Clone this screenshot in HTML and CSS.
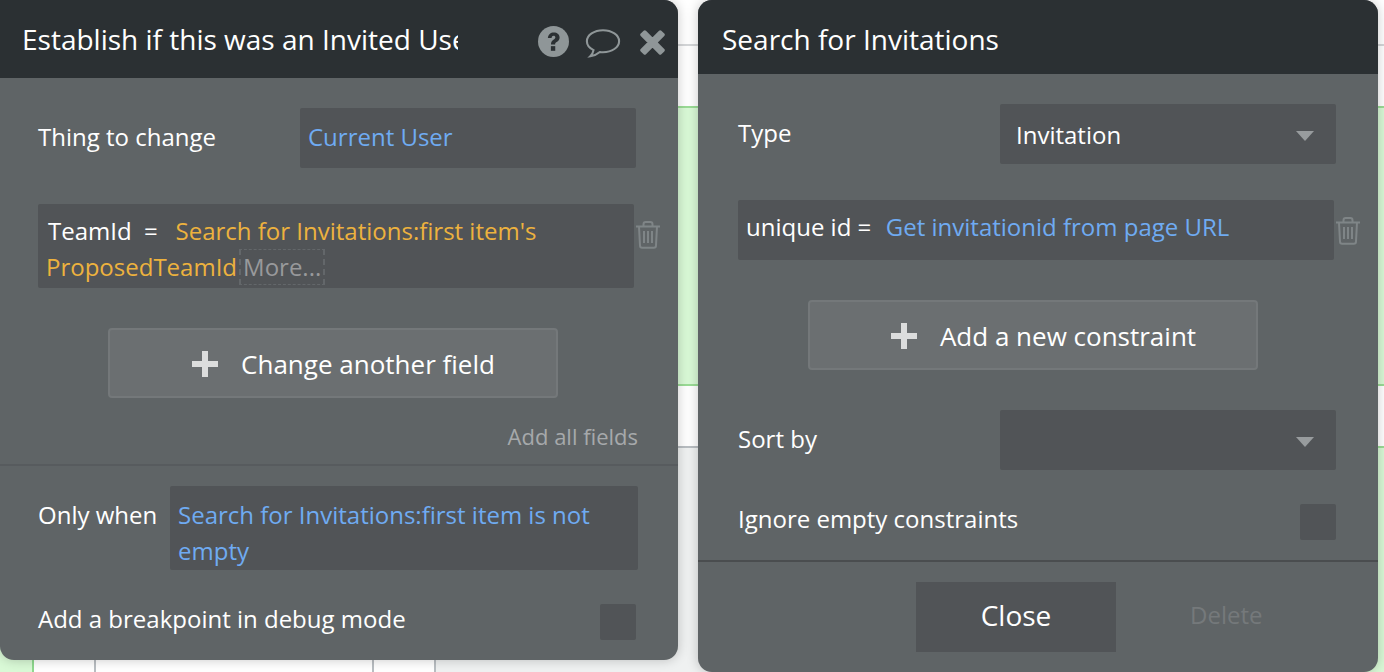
FILE: index.html
```html
<!DOCTYPE html>
<html lang="en">
<head>
<meta charset="utf-8">
<title>Workflow editor</title>
<link rel="stylesheet" href="styles.css">
</head>
<body>
<div class="stage">
  <div class="canvas">
    <div class="band"></div>
    <div class="rule rule-a"></div>
    <div class="rule rule-b"></div>
    <div class="lower"></div>
    <div class="band-low"></div>
    <div class="vline v1"></div>
    <div class="vline v2"></div>
    <div class="vline v3"></div>
    <div class="vline v4"></div>
    <div class="corner-green"></div>
  </div>
  <div class="panels">
    <section class="panel panel-left">
      <header class="head head-left">
        <h2 class="title title-clip">Establish if this was an Invited User</h2>
        <div class="head-icons">
          <svg class="ico-help" width="31" height="31" viewBox="0 0 32 32"><circle cx="16" cy="16" r="16" fill="#8f9698"/><path d="M10.200 12.400C10.500 8.700 13 6.600 16.300 6.600c3.500 0 6 2.100 6 5.200 0 2.300-1.300 3.600-3 4.700-1.300.8-1.600 1.300-1.600 2.600h-4.300c0-2.500.6-3.800 2.500-5 1.400-.9 2-1.400 2-2.300 0-1-.7-1.700-1.800-1.700-1.200 0-1.900.8-2.100 2.200z" fill="#2b3033"/><rect x="13.300" y="20.800" width="4.500" height="4.800" fill="#2b3033"/></svg>
          <svg class="ico-comment" width="36" height="31" viewBox="0 0 38 32"><path d="M19 2C9.600 2 2 7.200 2 13.600c0 3.900 2.800 7.300 7 9.400-.4 2.200-1.500 4.600-3.400 6.500 3.600-.6 7.700-2.400 10.100-4.500 1.100.2 2.200.2 3.300.2 9.400 0 17-5.200 17-11.600S28.400 2 19 2z" fill="none" stroke="#8f9698" stroke-width="2.200"/></svg>
          <svg class="ico-close" width="25" height="25" viewBox="0 0 26 26"><path d="M5 2 13 10 21 2 24 5 16 13 24 21 21 24 13 16 5 24 2 21 10 13 2 5z" fill="#8f9698" stroke="#8f9698" stroke-width="3.500" stroke-linejoin="round"/></svg>
        </div>
      </header>
      <div class="row row-thing">
        <span class="label">Thing to change</span>
        <div class="box box-value"><span class="blue">Current User</span></div>
      </div>
      <div class="field-row field-team">
        <div class="box-wide team-box">
          <span class="line"><span class="white first-word">TeamId&nbsp;&nbsp;=&nbsp;&nbsp;&nbsp;</span><span class="orange">Search for Invitations:first item's</span></span>
          <span class="line"><span class="orange">ProposedTeamId</span><span class="more">More...</span></span>
        </div>
        <svg class="trash" width="24" height="28" viewBox="0 0 24 28"><path d="M0 5.500h24M3 5.500l1 19c0 1.300.8 2.300 2.200 2.300h11.600c1.400 0 2.200-1 2.200-2.300l1-19M7.500 5V3.200C7.500 1.900 8.400 1 9.700 1h4.600c1.300 0 2.200.9 2.200 2.200V5M8 10v12M12 10v12M16 10v12" fill="none" stroke="#7f8587" stroke-width="2"/></svg>
      </div>
      <button class="add-btn add-left"><svg class="plus" width="28" height="28" viewBox="0 0 28 28"><path d="M11 1h6v10h10v6H17v10h-6V17H1v-6h10z" fill="#dcdddd"/></svg><span>Change another field</span></button>
      <div class="add-all">Add all fields</div>
      <div class="divider divider-left"></div>
      <div class="row row-when">
        <span class="label label-when">Only when</span>
        <div class="box-when blue">Search for Invitations:first item is not empty</div>
      </div>
      <div class="row row-break">
        <span class="label label-check">Add a breakpoint in debug mode</span>
        <div class="check"></div>
      </div>
    </section>

    <section class="panel panel-right">
      <header class="head head-right">
        <h2 class="title">Search for Invitations</h2>
      </header>
      <div class="row row-type">
        <span class="label label-up">Type</span>
        <div class="box box-select"><span class="white">Invitation</span><i class="caret"></i></div>
      </div>
      <div class="field-row field-unique">
        <div class="box-wide unique-box"><span class="white">unique id =&nbsp;&nbsp;</span><span class="blue url">Get invitationid from page URL</span></div>
        <svg class="trash" width="24" height="28" viewBox="0 0 24 28"><path d="M0 5.500h24M3 5.500l1 19c0 1.300.8 2.300 2.200 2.300h11.600c1.400 0 2.200-1 2.200-2.300l1-19M7.500 5V3.200C7.500 1.900 8.400 1 9.700 1h4.600c1.300 0 2.200.9 2.200 2.200V5M8 10v12M12 10v12M16 10v12" fill="none" stroke="#7f8587" stroke-width="2"/></svg>
      </div>
      <button class="add-btn add-right"><svg class="plus" width="28" height="28" viewBox="0 0 28 28"><path d="M11 1h6v10h10v6H17v10h-6V17H1v-6h10z" fill="#dcdddd"/></svg><span>Add a new constraint</span></button>
      <div class="row row-sort">
        <span class="label label-up">Sort by</span>
        <div class="box box-select"><i class="caret"></i></div>
      </div>
      <div class="row row-ignore">
        <span class="label label-check">Ignore empty constraints</span>
        <div class="check"></div>
      </div>
      <div class="divider divider-right"></div>
      <div class="foot">
        <button class="close-btn">Close</button>
        <span class="delete">Delete</span>
      </div>
    </section>
  </div>
</div>
</body>
</html>
```
FILE: styles.css
```css
* { box-sizing: border-box; }
html, body { margin: 0; padding: 0; }
body {
  width: 1384px;
  height: 672px;
  overflow: hidden;
  background: #fff;
  font-family: "Open Sans", "Liberation Sans", sans-serif;
  font-size: 24px;
  color: #fff;
}
.stage { position: relative; width: 1384px; height: 672px; overflow: hidden; }

/* the page behind the floating editor windows */
.canvas { position: absolute; inset: 0; }
.band { position: absolute; left: 33px; right: 0; top: 106px; height: 280px; background: #d9f9d6; border-top: 2px solid #9bdc96; border-bottom: 2px solid #9bdc96; }
.rule { position: absolute; left: 0; right: 0; height: 2px; background: #d5d7d9; }
.rule-a { top: 44px; }
.rule-b { top: 446px; background: #b9bec2; }
.lower { position: absolute; left: 436px; width: 600px; top: 448px; bottom: 0; background: #eff1f1; }
.band-low { position: absolute; left: 1036px; right: 0; top: 446px; bottom: 0; background: #d9f9d6; border-top: 2px solid #9bdc96; }
.vline { position: absolute; top: 640px; bottom: 0; width: 2px; background: #b9bec2; }
.v1 { left: 32px; background: #8fd98f; }
.v2 { left: 94px; }
.v3 { left: 372px; }
.v4 { left: 434px; }
.corner-green { position: absolute; left: 0; top: 640px; bottom: 0; width: 32px; background: #d9f9d6; }

.panels { position: relative; display: flex; gap: 20px; align-items: flex-start; }
.panel {
  background: #5f6466;
  box-shadow: 0 0 12px rgba(0, 0, 0, .22);
  display: flex;
  flex-direction: column;
}
.panel-left { width: 678px; height: 660px; border-radius: 0 14px 14px 14px; }
.panel-right { width: 680px; height: 672px; border-radius: 14px; }

.head { background: #2b3033; display: flex; align-items: center; flex: none; }
.head-left { height: 78px; padding: 0 13px 0 22px; border-radius: 0 14px 0 0; }
.head-right { height: 74px; padding: 4px 22px 0 24px; border-radius: 14px 14px 0 0; }
.title { margin: 0; font-size: 28px; font-weight: 400; line-height: 40px; white-space: nowrap; color: #fff; }
.title-clip { width: 436px; overflow: hidden; }
.head-icons { margin-left: auto; display: flex; align-items: flex-start; align-self: flex-start; }
.ico-help { margin: 26px 16px 0 0; }
.ico-comment { margin: 28px 19px 0 0; }
.ico-close { margin-top: 30px; }

.label { color: #fff; line-height: 36px; white-space: nowrap; }
.label-up { padding-bottom: 2px; }
.label-check { line-height: 30px; }
.label-when { padding-top: 11px; }
.white { color: #fff; }
.blue { color: #6fabf2; }
.orange { color: #edb23e; }

.row { display: flex; align-items: center; justify-content: space-between; }
.box {
  width: 336px;
  height: 60px;
  background: #515457;
  border-radius: 2px;
  display: flex;
  align-items: center;
  padding: 0 8px 4px;
}
.box-select { padding: 0 16px; justify-content: space-between; }
.caret { display: block; width: 0; height: 0; margin-left: auto; margin-right: 6px; margin-top: 4px; border-left: 9px solid transparent; border-right: 9px solid transparent; border-top: 10px solid #989c9e; }
.box-wide { width: 596px; background: #515457; border-radius: 2px; }
.line { display: block; line-height: 36px; white-space: nowrap; }

/* left window */
.row-thing { margin: 30px 42px 0 38px; }
.row-thing .label { padding-bottom: 2px; }
.field-row { display: flex; align-items: flex-start; }
.field-team { margin: 36px 0 0 38px; }
.team-box { height: 84px; padding: 9px 8px 0; }
.first-word { padding-left: 2px; margin-right: -1px; }
.more { display: inline-block; height: 36px; margin-left: 2px; padding: 0 2px; color: #98999b; border: 2px dashed #63676a; border-top-width: 1px; border-bottom-width: 1px; line-height: 34px; }
.trash { flex: none; margin: 17px 0 0 2px; }
.add-btn {
  display: flex;
  align-items: center;
  justify-content: center;
  gap: 22px;
  width: 450px;
  height: 70px;
  padding: 1px 0 0 20px;
  background: #6b6f71;
  border: 2px solid #74787a;
  border-radius: 4px;
  color: #fff;
  font-family: inherit;
  font-size: 26px;
}
.add-left { margin: 40px 0 0 108px; }
.add-right { margin: 40px 0 0 110px; }
.add-all { margin: 20px 40px 0 0; text-align: right; color: #a6a9ab; line-height: 36px; font-size: 22px; }
.divider { height: 2px; flex: none; }
.divider-left { margin-top: 10px; background: #575b5e; }
.row-when { margin: 20px 40px 0 38px; align-items: flex-start; }
.box-when { width: 468px; height: 84px; padding: 11px 8px 0; background: #515457; border-radius: 2px; line-height: 36px; }
.row-break { margin: 34px 42px 0 38px; align-items: flex-start; }
.check { width: 36px; height: 36px; background: #515457; border-radius: 2px; flex: none; }

/* right window */
.row-type { margin: 30px 42px 0 40px; }
.field-unique { margin: 36px 0 0 40px; }
.unique-box { height: 60px; padding: 9px 8px 0; line-height: 36px; white-space: nowrap; }
.url { margin-left: 2px; }
.row-sort { margin: 40px 42px 0 40px; }
.row-ignore { margin: 34px 42px 0 40px; align-items: flex-start; }
.divider-right { margin-top: 20px; background: #4a4d4f; }
.foot { display: flex; align-items: center; margin: 20px 0 0 218px; }
.close-btn { width: 200px; height: 70px; padding: 0 0 5px; background: #515457; border: 0; color: #fff; font-family: inherit; font-size: 28px; }
.delete { margin-left: 74px; padding-bottom: 5px; color: #75797b; }
```
